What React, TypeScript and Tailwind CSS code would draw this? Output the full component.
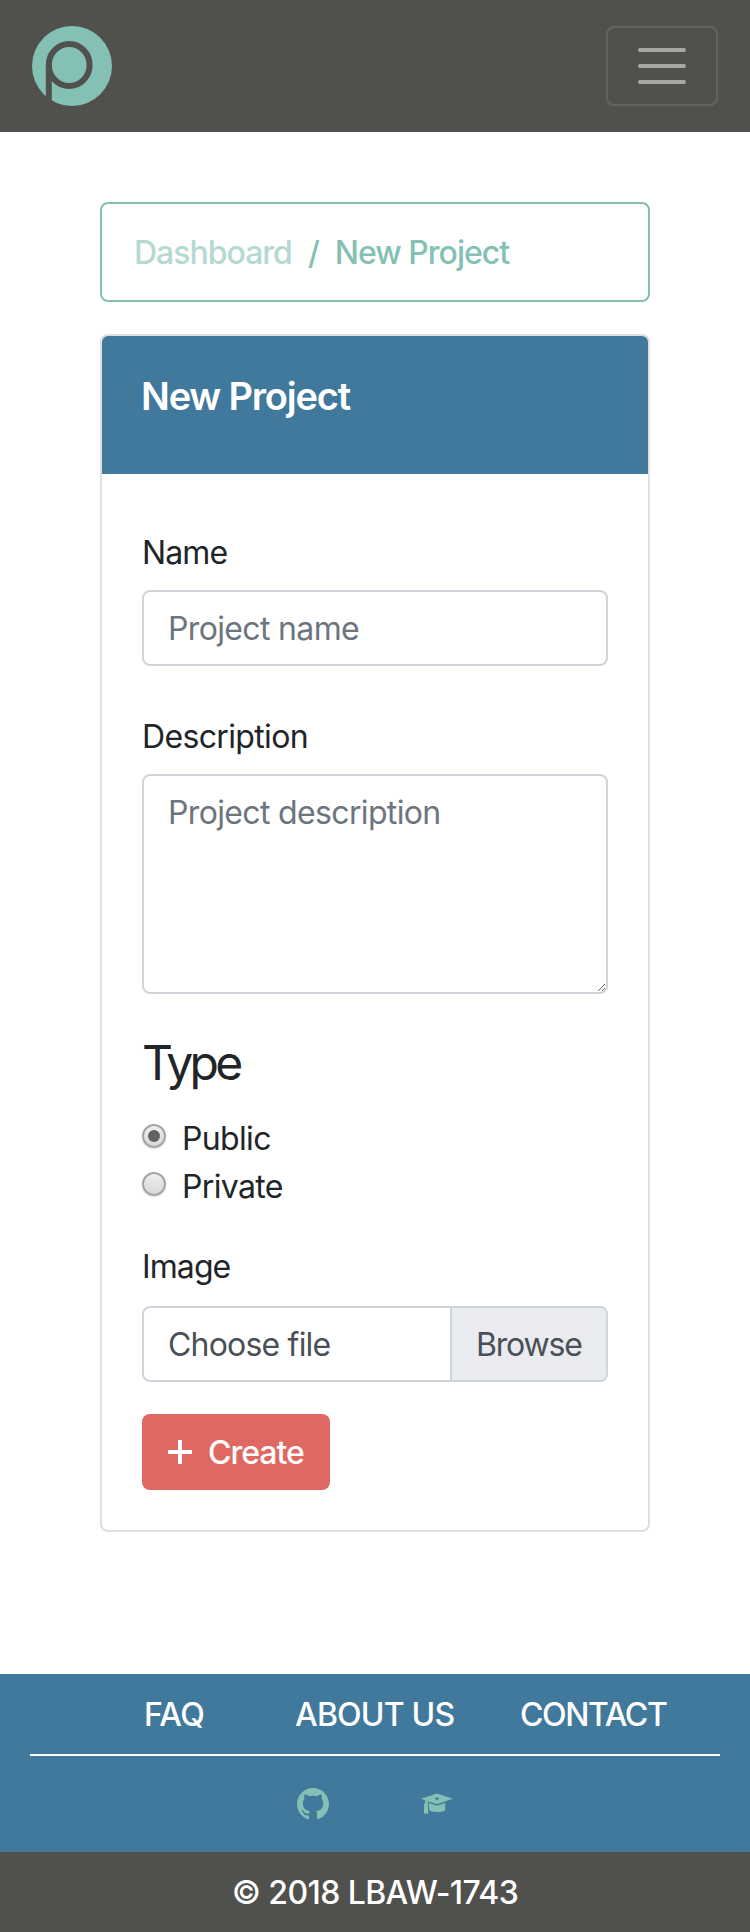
import React from "react";

function Logo() {
  return (
    <svg width="80" height="80" viewBox="0 0 80 80" aria-label="Plenum">
      <circle cx="40" cy="40" r="40" fill="#84c0b4" />
      <path d="M16.8 80V39" stroke="#50504d" strokeWidth="6" fill="none" />
      <ellipse cx="37.2" cy="39" rx="20.4" ry="21" stroke="#50504d" strokeWidth="6" fill="none" />
    </svg>
  );
}

function GithubMark() {
  return (
    <svg width="32" height="32" viewBox="0 0 16 16" fill="#84c0b4">
      <path
        fillRule="evenodd"
        d="M8 0C3.58 0 0 3.58 0 8c0 3.54 2.29 6.53 5.47 7.59.4.07.55-.17.55-.38 0-.19-.01-.82-.01-1.49-2.01.37-2.53-.49-2.69-.94-.09-.23-.48-.94-.82-1.13-.28-.15-.68-.52-.01-.53.63-.01 1.08.58 1.23.82.72 1.21 1.87.87 2.33.66.07-.52.28-.87.51-1.07-1.78-.2-3.64-.89-3.64-3.95 0-.87.31-1.59.82-2.15-.08-.2-.36-1.02.08-2.12 0 0 .67-.21 2.2.82.64-.18 1.32-.27 2-.27s1.36.09 2 .27c1.53-1.04 2.2-.82 2.2-.82.44 1.1.16 1.92.08 2.12.51.56.82 1.27.82 2.15 0 3.07-1.87 3.75-3.65 3.95.29.25.54.73.54 1.48 0 1.07-.01 1.93-.01 2.2 0 .21.15.46.55.38A8.01 8.01 0 0 0 16 8c0-4.42-3.58-8-8-8z"
      />
    </svg>
  );
}

function GraduationCap() {
  return (
    <svg width="32" height="22" viewBox="0 0 32 22" fill="#84c0b4">
      <path
        fillRule="evenodd"
        d="M16 .5 32 5.7 16 11.2 6.8 8.2 7.2 20.5H3V11L4.2 10V7.2L0 5.7ZM14 5.5Q14 6.7 16 6.7T18 5.5 16 4.4 14 5.5Z"
      />
      <path d="M7.6 9.7 16 12.7 24.2 10V17Q22.6 19 16 19T8.2 16.8Z" />
    </svg>
  );
}

function Radio({ label, checked }: { label: string; checked?: boolean }) {
  return (
    <label className="flex h-12 items-center">
      <span className="mb-1 flex size-6 items-center justify-center rounded-full border-2 border-[#a4a4a4] bg-linear-to-b from-[#eeeeee] to-[#d9d9d9] shadow-[0_1px_2px_rgba(0,0,0,0.12)]">
        {checked && <span className="size-3 rounded-full bg-[#626262]" />}
      </span>
      <span className="ml-4 pt-0.5">{label}</span>
    </label>
  );
}

export default function App() {
  return (
    <div className="flex h-[1932px] w-[750px] flex-col bg-white font-['Inter',sans-serif] text-[32px] leading-[48px] tracking-[-0.65px] text-[#212529]">
      <header className="flex h-[132px] items-center justify-between bg-[#50504d] px-8">
        <Logo />
        <button className="flex h-20 w-28 flex-col items-center justify-center gap-3 rounded-lg border-2 border-white/10">
          <span className="h-1 w-12 rounded-full bg-[#a7a7a6]" />
          <span className="h-1 w-12 rounded-full bg-[#a7a7a6]" />
          <span className="h-1 w-12 rounded-full bg-[#a7a7a6]" />
        </button>
      </header>

      <main className="flex grow flex-col px-[100px] pt-[70px]">
        <nav className="flex h-[100px] items-center rounded-lg border-2 border-[#84c0b4] px-8 pt-0.5 font-[450] tracking-[-1px] text-[#84c0b4]">
          <a className="text-[#b5d9d1]">Dashboard</a>
          <span className="px-4 font-medium">/</span>
          <span className="font-medium">New Project</span>
        </nav>

        <section className="mt-8 h-[1198px] overflow-hidden rounded-lg border-2 border-[#dfdfdf]">
          <h1 className="h-[138px] bg-[#40799c] px-[39px] pt-9 text-[38px] font-semibold tracking-[-1.2px] text-white">
            New Project
          </h1>
          <form className="flex flex-col px-10 pt-[55px]">
            <label className="tracking-[-0.9px]">Name</label>
            <input
              placeholder="Project name"
              className="mt-[13px] h-[76px] rounded-lg border-2 border-[#ced4da] px-6 placeholder:text-[#6c757d]"
            />
            <label className="mt-[47px]">Description</label>
            <textarea
              placeholder="Project description"
              className="mt-[13px] h-[220px] resize rounded-lg border-2 border-[#ced4da] px-6 py-[13px] placeholder:text-[#6c757d]"
            />
            <h2 className="mt-10 text-[48px] leading-[58px] tracking-[-3.7px]">Type</h2>
            <div className="mt-[22px] flex flex-col">
              <Radio label="Public" checked />
              <Radio label="Private" />
            </div>
            <label className="mt-[33px] tracking-[-0.9px]">Image</label>
            <div className="mt-[15px] flex h-[76px] overflow-hidden rounded-lg border-2 border-[#ced4da] text-[#495057]">
              <span className="grow px-6 py-[13px] tracking-[-0.8px]">Choose file</span>
              <span className="w-[156px] border-l-2 border-[#ced4da] bg-[#e9ebef] px-6 py-[13px] tracking-[-1.2px]">
                Browse
              </span>
            </div>
            <button
              type="button"
              className="mt-8 flex h-[76px] w-[188px] items-center rounded-lg bg-[#e06862] px-[26px] font-medium tracking-[-1px] text-white"
            >
              <svg width="24" height="24" viewBox="0 0 24 24" className="mr-4 shrink-0">
                <path d="M12 0v24M0 12h24" stroke="white" strokeWidth="4" />
              </svg>
              <span className="pt-0.5">Create</span>
            </button>
          </form>
        </section>
      </main>

      <footer className="text-white">
        <div className="flex h-[178px] flex-col bg-[#40799c] px-[30px]">
          <div className="flex h-20 items-center pt-0.5 pl-[114px] font-medium">
            <a className="w-[151px]">FAQ</a>
            <a className="w-[225px] tracking-[-0.8px]">ABOUT US</a>
            <a className="tracking-[-1.4px]">CONTACT</a>
          </div>
          <div className="h-0.5 bg-white" />
          <div className="flex items-center pt-8 pl-[267px]">
            <GithubMark />
            <span className="ml-[92px]">
              <GraduationCap />
            </span>
          </div>
        </div>
        <div className="flex h-20 items-center justify-center bg-[#50504d] pt-0.5 font-medium tracking-[-0.6px]">
          © 2018 LBAW-1743
        </div>
      </footer>
    </div>
  );
}
